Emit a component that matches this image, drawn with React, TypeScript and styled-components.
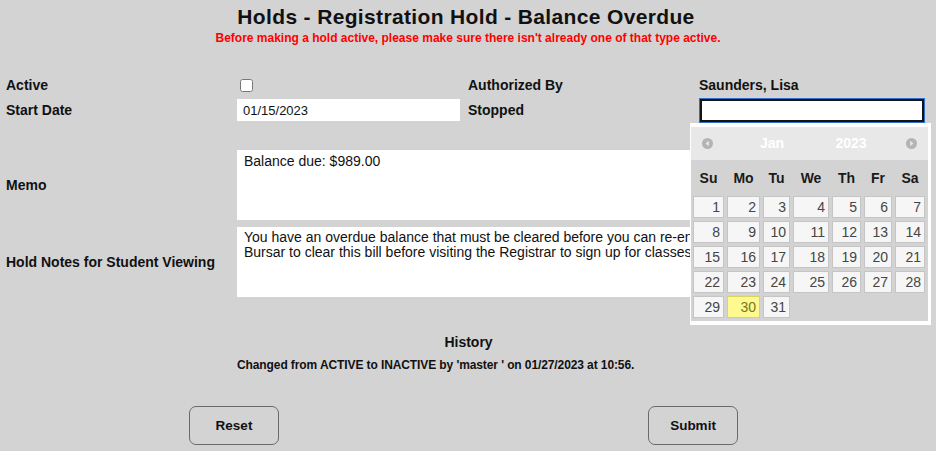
import React from "react";
import styled, { createGlobalStyle } from "styled-components";

const Global = createGlobalStyle`
  html, body { margin: 0; padding: 0; background: #d3d3d3; }
  body { font-family: "Liberation Sans", Arial, sans-serif; color: #111; }
  * { box-sizing: border-box; }
`;

const Page = styled.div`
  position: relative;
  width: 936px;
  height: 451px;
  padding: 5px 6px 0;
  overflow: hidden;
`;

const Title = styled.h1`
  margin: 0;
  text-align: center;
  font-size: 21px;
  line-height: 24px;
  letter-spacing: 0.35px;
  font-weight: bold;
  color: #111;
  padding-right: 4px;
`;

const Warning = styled.p`
  margin: 2px 0 0;
  text-align: center;
  color: #ff0000;
  font-size: 12px;
  line-height: 14px;
  font-weight: bold;
`;

const FormGrid = styled.div`
  display: grid;
  grid-template-columns: 231px 231px 231px 226px;
  grid-template-rows: 20px 28px;
  row-gap: 1px;
  align-items: center;
  margin-top: 30px;
`;

const Label = styled.div`
  font-size: 14px;
  line-height: 16px;
  font-weight: bold;
  color: #111;
`;

const Value = styled.div`
  font-size: 14px;
  line-height: 16px;
  font-weight: bold;
  color: #111;
`;

const Check = styled.input`
  display: block;
  width: 13px;
  height: 13px;
  margin: 0 0 0 3px;
`;

const DateInput = styled.input`
  display: block;
  width: 223px;
  height: 22px;
  border: none;
  background: #fff;
  padding: 0 6px;
  font-family: "Liberation Sans", Arial, sans-serif;
  font-size: 13px;
  color: #111;
`;

const PopCell = styled.div`
  position: relative;
  height: 25px;
`;

const FocusInput = styled.input`
  display: block;
  width: 224px;
  height: 23px;
  margin: 1px 0 0 1px;
  border: 2px solid #141414;
  outline: 1px solid #2f6fd0;
  background: #fff;
  padding: 0 4px;
  font-size: 13px;
`;

const NotesGrid = styled.div`
  display: grid;
  grid-template-columns: 231px 688px;
  grid-template-rows: 70px 70px;
  row-gap: 7px;
  align-items: center;
  margin-top: 26px;
`;

const Area = styled.textarea<{ $top: number }>`
  display: block;
  width: 688px;
  height: 70px;
  border: none;
  background: #fff;
  padding: ${(p) => p.$top}px 6px 0 7px;
  font-family: "Liberation Sans", Arial, sans-serif;
  font-size: 14px;
  line-height: 15px;
  color: #111;
  resize: none;
  overflow: hidden;
`;

const History = styled.div`
  margin-top: 37px;
  text-align: center;
  font-size: 14px;
  line-height: 16px;
  font-weight: bold;
  padding-left: 1px;
`;

const HistoryLine = styled.div`
  margin: 8px 0 0 231px;
  font-family: "Liberation Sans", Arial, sans-serif;
  font-size: 12px;
  line-height: 14px;
  font-weight: bold;
  letter-spacing: -0.1px;
  color: #111;
`;

const Buttons = styled.div`
  display: flex;
  margin-top: 34px;
`;

const Button = styled.button<{ $left: number }>`
  width: 90px;
  height: 39px;
  margin-left: ${(p) => p.$left}px;
  border: 1px solid #6a6a6a;
  border-radius: 7px;
  background: #d3d3d3;
  font-family: "Liberation Sans", Arial, sans-serif;
  font-size: 13.5px;
  font-weight: bold;
  color: #111;
  padding: 0;
`;

/* ---------- Datepicker ---------- */
const Picker = styled.div`
  position: absolute;
  left: -9px;
  top: 100%;
  width: 241px;
  background: #fff;
  padding: 4px 3px 4px 1px;
  z-index: 5;
`;

const PickerHeader = styled.div`
  display: flex;
  align-items: center;
  height: 33px;
  background: #e8e8e8;
  padding: 0 11px 0 11px;
`;

const NavIcon = styled.svg`
  width: 11px;
  height: 11px;
  flex: none;
`;

const HeadText = styled.span<{ $w: number }>`
  width: ${(p) => p.$w}px;
  text-align: center;
  color: #fff;
  font-size: 14px;
  font-weight: bold;
`;

const Spacer = styled.span`
  flex: 1;
`;

const PickerBody = styled.div`
  background: #d3d3d3;
  padding: 0 2px 3px 2px;
`;

const DayGrid = styled.div`
  display: grid;
  grid-template-columns: 31px 33px 27px 36px 29px 28px 30px;
  column-gap: 3px;
  row-gap: 3px;
`;

const DayHead = styled.div`
  height: 36px;
  display: flex;
  align-items: center;
  justify-content: center;
  font-size: 14px;
  font-weight: bold;
  color: #1a1a1a;
`;

const DayCell = styled.div<{ $hl?: boolean }>`
  height: 22px;
  border: 1px solid ${(p) => (p.$hl ? "#dad55e" : "#c5c5c5")};
  background: ${(p) => (p.$hl ? "#fffa90" : "#f6f6f6")};
  color: ${(p) => (p.$hl ? "#777620" : "#454545")};
  font-size: 14px;
  line-height: 20px;
  text-align: right;
  padding-right: 3px;
`;

const Empty = styled.div``;

const Prev = () => (
  <NavIcon viewBox="0 0 11 11">
    <circle cx="5.5" cy="5.5" r="5.5" fill="#b4b4b4" />
    <path d="M6.8 2.8 L3.6 5.5 L6.8 8.2 Z" fill="#e8e8e8" />
  </NavIcon>
);

const Next = () => (
  <NavIcon viewBox="0 0 11 11">
    <circle cx="5.5" cy="5.5" r="5.5" fill="#b4b4b4" />
    <path d="M4.2 2.8 L7.4 5.5 L4.2 8.2 Z" fill="#e8e8e8" />
  </NavIcon>
);

const dayNames = ["Su", "Mo", "Tu", "We", "Th", "Fr", "Sa"];

const DatePicker = () => {
  const cells: (number | null)[] = [];
  for (let d = 1; d <= 31; d++) cells.push(d);
  while (cells.length % 7 !== 0) cells.push(null);
  return (
    <Picker>
      <PickerHeader>
        <Prev />
        <HeadText $w={118}>Jan</HeadText>
        <HeadText $w={40}>2023</HeadText>
        <Spacer />
        <Next />
      </PickerHeader>
      <PickerBody>
        <DayGrid>
          {dayNames.map((n) => (
            <DayHead key={n}>{n}</DayHead>
          ))}
        </DayGrid>
        <DayGrid>
          {cells.map((d, i) =>
            d === null ? (
              <Empty key={i} />
            ) : (
              <DayCell key={i} $hl={d === 30}>
                {d}
              </DayCell>
            )
          )}
        </DayGrid>
      </PickerBody>
    </Picker>
  );
};

export default function App() {
  return (
    <>
      <Global />
      <Page>
        <Title>Holds - Registration Hold - Balance Overdue</Title>
        <Warning>
          Before making a hold active, please make sure there isn't already one of that type active.
        </Warning>

        <FormGrid>
          <Label>Active</Label>
          <div>
            <Check type="checkbox" />
          </div>
          <Label>Authorized By</Label>
          <Value>Saunders, Lisa</Value>

          <Label>Start Date</Label>
          <div>
            <DateInput type="text" defaultValue="01/15/2023" />
          </div>
          <Label>Stopped</Label>
          <PopCell>
            <FocusInput type="text" defaultValue="" />
            <DatePicker />
          </PopCell>
        </FormGrid>

        <NotesGrid>
          <Label>Memo</Label>
          <Area $top={4} readOnly value="Balance due: $989.00" />
          <Label>Hold Notes for Student Viewing</Label>
          <Area
            $top={3}
            readOnly
            value={
              "You have an overdue balance that must be cleared before you can re-enroll. Please contact the\nBursar to clear this bill before visiting the Registrar to sign up for classes."
            }
          />
        </NotesGrid>

        <History>History</History>
        <HistoryLine>
          Changed from ACTIVE to INACTIVE by 'master ' on 01/27/2023 at 10:56.
        </HistoryLine>

        <Buttons>
          <Button $left={183}>Reset</Button>
          <Button $left={369}>Submit</Button>
        </Buttons>
      </Page>
    </>
  );
}
